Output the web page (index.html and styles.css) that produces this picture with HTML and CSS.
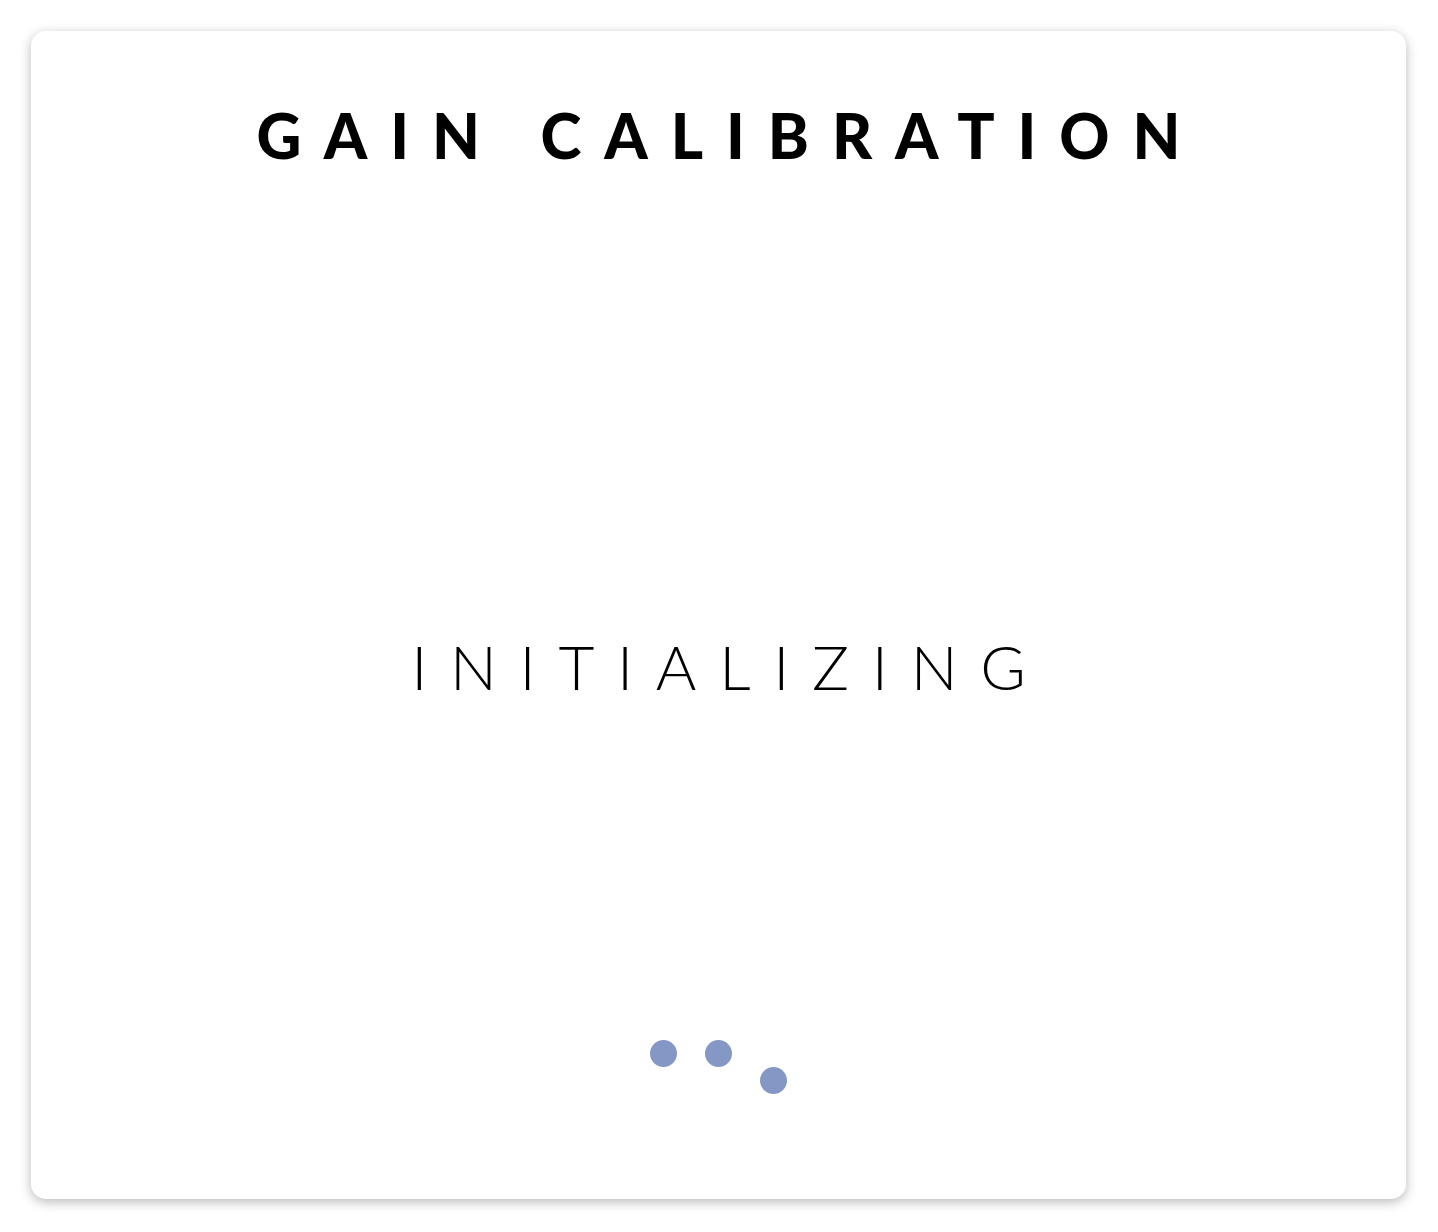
FILE: index.html
```html
<!DOCTYPE html>
<html lang="en">
<head>
<meta charset="utf-8">
<title>Gain Calibration</title>
<link rel="stylesheet" href="styles.css">
</head>
<body>
  <main class="card">
    <h1 class="title">GAIN CALIBRATION</h1>
    <div class="status">
      <p class="status-text">INITIALIZING</p>
    </div>
    <div class="loader" aria-label="Loading">
      <span class="dot dot-1"></span>
      <span class="dot dot-2"></span>
      <span class="dot dot-3"></span>
    </div>
  </main>
</body>
</html>
```

FILE: styles.css
```css
html, body {
  margin: 0;
  padding: 0;
  background: #ffffff;
}

body {
  padding: 31px 32px 33px 31px;
  box-sizing: border-box;
  height: 1232px;
  font-family: "Lato", "Noto Sans", sans-serif;
  color: #000;
}

.card {
  height: 100%;
  box-sizing: border-box;
  background: #fff;
  border-radius: 15px;
  box-shadow: 0 3px 12px rgba(0, 0, 0, 0.28);
  display: flex;
  flex-direction: column;
  align-items: center;
}

.title {
  margin: 73px 0 0 0;
  font-size: 62px;
  line-height: 62px;
  font-weight: 900;
  letter-spacing: 0.37em;
  text-indent: 0.37em;
}

.status {
  flex: 1;
  display: flex;
  align-items: center;
  justify-content: center;
  padding-top: 126px;
}

.status-text {
  margin: 0;
  font-size: 62px;
  line-height: 62px;
  font-weight: 300;
  letter-spacing: 0.366em;
  text-indent: 0.366em;
}

.loader {
  display: flex;
  gap: 28px;
  height: 54px;
  margin-bottom: 105px;
}

.dot {
  width: 27px;
  height: 27px;
  border-radius: 50%;
  background: #8597c5;
}

.dot-3 {
  margin-top: 27px;
}
```
